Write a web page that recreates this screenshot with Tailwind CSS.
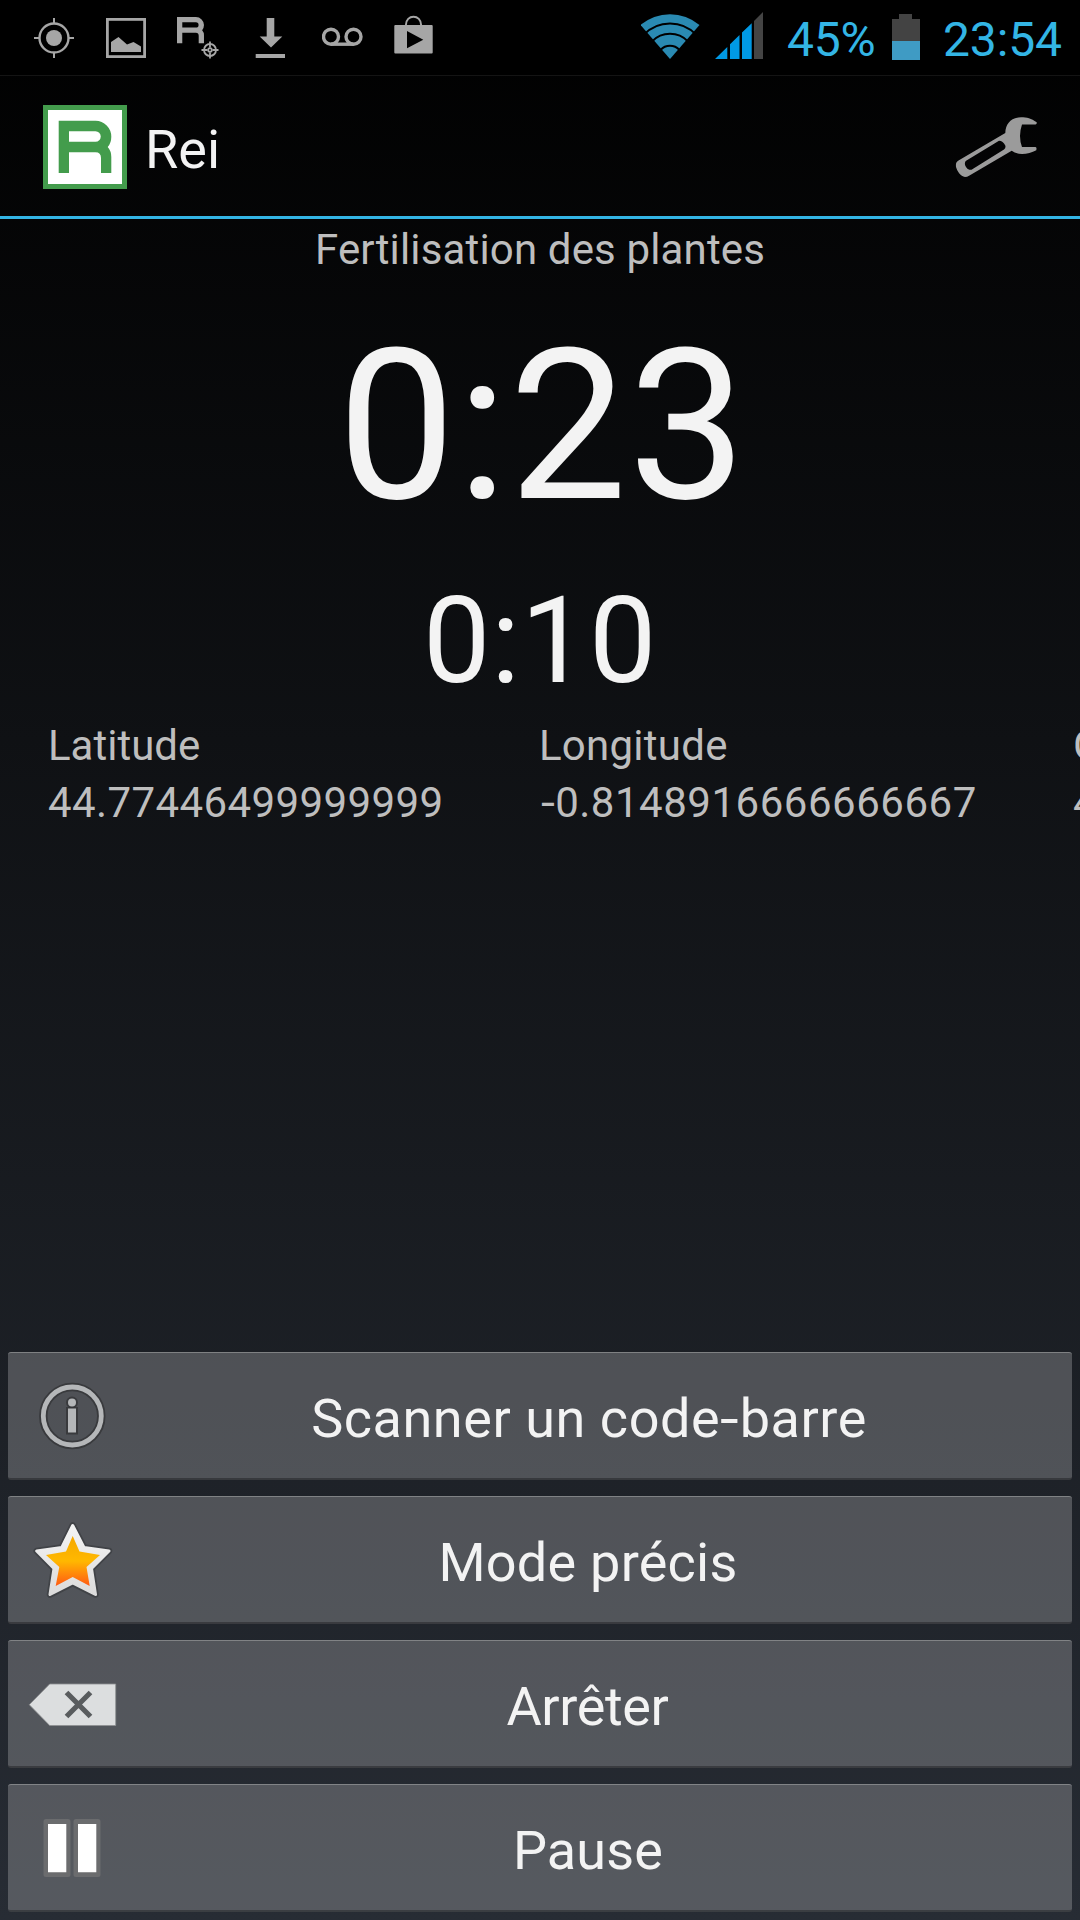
<!DOCTYPE html>
<html lang="fr">
<head>
<meta charset="utf-8">
<title>Rei</title>
<script src="https://cdn.jsdelivr.net/npm/@tailwindcss/browser@4"></script>
</head>
<body class="w-[1080px] h-[1920px] overflow-hidden bg-black font-['Roboto',sans-serif] text-[#f3f3f3]">
<div class="w-[1080px] h-[1920px] flex flex-col overflow-hidden bg-[linear-gradient(to_bottom,#000000,#272c34)]">

  <!-- Status bar -->
  <header class="h-[76px] shrink-0 bg-black border-b border-[#141414] flex justify-between text-[#33b5e5] text-[48px]">
    <div class="flex fill-[#a6a6a6] pl-[34px] gap-[32px]">
      <svg class="w-[40px] h-[75px]" viewBox="34 0 40 75"><circle cx="54" cy="38" r="14.5" fill="none" stroke="#a6a6a6" stroke-width="2.4"/><circle cx="54" cy="38" r="8"/><path d="M53 18h2v6h-2zM53 52h2v6h-2zM34 37h6v2h-6zM68 37h6v2h-6z"/></svg>
      <svg class="w-[40px] h-[75px]" viewBox="106 0 40 75"><rect x="107.4" y="19.4" width="37.2" height="37.2" fill="none" stroke="#a6a6a6" stroke-width="2.8"/><path d="M111 52V42L118.5 37L127 44.5L133.5 42L141 46.5V52Z"/></svg>
      <svg class="w-[42px] h-[75px] -ml-px" viewBox="177 0 42 75"><path fill-rule="evenodd" transform="translate(177 17) scale(.513 .5) translate(-58.7 -120.7)" d="M58.7 120.7H95.5A16 16 0 0 1 111.3 136.7Q111.3 143 107.7 147Q111.3 151 111.3 157V173H101V158Q101 152.2 95.5 152.2H69V173H58.7ZM69 131.2V141.7H95.5a5.2 5.2 0 0 0 0-10.5Z"/><g fill="none" stroke="#a6a6a6" stroke-width="1.8"><circle cx="210" cy="50" r="6"/><circle cx="210" cy="50" r="1.8"/><path d="M210 41.5v6M210 52.5v6M201.5 50h6M212.500 50h6"/></g></svg>
      <svg class="w-[30px] h-[75px] ml-[4px]" viewBox="255 0 30 75"><path d="M266.700 18H274.300V36.500H282.300L271 47.500L259.700 36.500H266.700ZM255.700 54H285V58H255.700Z"/></svg>
      <svg class="w-[41px] h-[75px] ml-[5px]" viewBox="322 0 41 75"><g fill="none" stroke="#a6a6a6" stroke-width="3.400"><circle cx="331" cy="36.700" r="7.500"/><circle cx="353.500" cy="36.700" r="7.500"/><path d="M331 44.200H353.500"/></g></svg>
      <svg class="w-[40px] h-[75px] -ml-px" viewBox="394 0 40 75"><path fill-rule="evenodd" d="M395.300 25H431.700Q432.700 25 432.700 26V52.500Q432.700 53.500 431.700 53.500H395.300Q394.300 53.500 394.300 52.500V26Q394.300 25 395.300 25ZM407 31V48.300L423.300 39.700Z"/><path d="M405.800 25.500C405.800 13.800 421.200 13.800 421.200 25.500" fill="none" stroke="#a6a6a6" stroke-width="2"/></svg>
    </div>
    <div class="flex">
      <svg class="w-[60px] h-[75px]" viewBox="641.5 0 60 75"><path d="M641 25A45.500 45.500 0 0 1 700 25L670.500 59Z" fill="#2a8ab2"/><g fill="none" stroke="#000" stroke-width="2"><path d="M644.500 34.500A36 36 0 0 1 696.500 34.500"/><path d="M652.500 41.500A25 25 0 0 1 688.500 41.500"/><path d="M661 50A13 13 0 0 1 680 50"/></g></svg>
      <svg class="w-[49px] h-[75px] ml-[14px]" viewBox="715 0 49 75"><path fill="#0099e5" d="M715 59L727.300 47V59ZM730 59V44.300L739.500 35V59ZM742 59V32.600L751.700 23.200V59Z"/><path fill="#444" d="M754 59V21L763 12V59Z"/></svg>
      <span class="w-[105px] ml-[23px] leading-[79px] tracking-[-0.2px]">45%</span>
      <svg class="w-[28px] h-[75px]" viewBox="892 0 28 75"><path fill="#434343" d="M899 14H912V19H920V60H892V19H899Z"/><path fill="#3f9bc4" d="M892 41H920V60H892Z"/></svg>
      <span class="w-[137px] ml-[23px] leading-[79px] tracking-[-0.14px]">23:54</span>
    </div>
  </header>

  <!-- Action bar -->
  <nav class="h-[143px] shrink-0 border-b-[3px] border-[#33b5e5] flex items-start pl-[43px]">
    <svg class="w-[84px] h-[84px] mt-[29px]" viewBox="43 105 84 84"><path fill="#439c4c" d="M43 105h84v84h-84z"/><path fill="#fff" d="M48 110h74v74h-74z"/><path fill="#439c4c" fill-rule="evenodd" d="M58.700 120.700H95.500A16 16 0 0 1 111.300 136.700Q111.300 143 107.700 147Q111.300 151 111.300 157V173H101V158Q101 152.200 95.500 152.200H69V173H58.700ZM69 131.200V141.700H95.500a5.200 5.200 0 0 0 0-10.500Z"/></svg>
    <h1 class="flex-1 pl-[18px] text-[54px] leading-[147px]">Rei</h1>
    <svg class="w-[84px] h-[62px] mt-[40px] mr-[41px]" viewBox="955 116 84 62"><path fill="#9b9b9b" fill-rule="evenodd" d="M1036.700 122.300C1031 118.500 1027 117.300 1021 117.300C1011 117.500 1005.500 124 1005.300 133L958.500 160.500C956 162 955.700 164 956 167C957.500 172 960.500 176 965 177Q967 177 969.500 175.500L1011.700 150.700Q1016 154 1022 154C1027 154 1032 152.500 1036.300 150.300Q1037 147 1035.500 147H1022Q1018 136 1022 124.500H1035.500Q1037 124.300 1036.700 122.300ZM999 140.800Q1003 141 1005.300 145.500Q1006 148 1004 149.500L971.500 169.700C967.500 171 963 164.500 965.700 161Z"/></svg>
  </nav>

  <!-- Timers and position -->
  <main class="flex-1 flex flex-col">
    <p class="text-center text-[42px] leading-[61px] tracking-[0.15px] text-[#bebebe]">Fertilisation des plantes</p>
    <p class="text-center text-[210px] leading-[292px] tracking-[1.27px] pl-[5px]">0:23</p>
    <p class="text-center text-[120px] leading-[138px] tracking-[0.7px]">0:10</p>
    <div class="grid grid-cols-[491px_534px_60px] pl-[48px] pt-[7px] text-[42px] leading-[57px] text-[#bebebe] whitespace-nowrap">
      <div><p>Latitude</p><p class="tracking-[0.4px]">44.77446499999999</p></div>
      <div><p class="tracking-[0.25px]">Longitude</p><p class="tracking-[0.52px]"><span class="inline-block ml-[1.5px] mr-[2.5px] origin-left scale-x-120">-</span>0.8148916666666667</p></div>
      <div><p>G</p><p>4</p></div>
    </div>
  </main>

  <!-- Actions -->
  <div class="flex flex-col gap-[16px] px-[8px] pb-[8px] text-[54px]">
    <button class="h-[128px] flex rounded-[3px] bg-[#aeb0b2]/35 border-t border-t-[#a0a2a4]/60 border-b-2 border-b-black/30">
      <svg class="w-[112px] h-[125px]" viewBox="8 1353 112 125"><g fill="none" stroke="#333537" stroke-opacity=".8"><circle cx="72.300" cy="1416" r="29" stroke-width="8.500"/><circle cx="72" cy="1402.500" r="4.500" stroke-width="3"/><path d="M67.500 1408.500h9v24.500h-9z" stroke-width="3"/></g><circle cx="72.300" cy="1416" r="29" fill="none" stroke="#b5b7b9" stroke-width="4.800"/><circle cx="72" cy="1402.500" r="4" fill="#b5b7b9"/><path d="M68 1408.500h8v24h-8z" fill="#b5b7b9"/></svg>
      <span class="flex-1 pr-[14px] leading-[131px] tracking-[0.55px]">Scanner un code<span class="inline-block mr-[4px] origin-left scale-x-125">-</span>barre</span>
    </button>
    <button class="h-[128px] flex rounded-[3px] bg-[#aeb0b2]/35 border-t border-t-[#a0a2a4]/60 border-b-2 border-b-black/30">
      <svg class="w-[112px] h-[125px]" viewBox="8 1497 112 125"><defs><linearGradient id="g" x1="0" y1="0" x2="0" y2="1"><stop offset="0" stop-color="#f5a800"/><stop offset=".5" stop-color="#ffb800"/><stop offset="1" stop-color="#ff5a14"/></linearGradient><linearGradient id="w" x1="0" y1="0" x2="0" y2="1"><stop offset="0" stop-color="#f4f4f4"/><stop offset="1" stop-color="#dcdcdc"/></linearGradient></defs><path d="M72.700 1525.500L84 1547.500L109 1551L91.500 1568.500L95.500 1594.500L72.700 1583L50 1594.500L54 1568.500L36.700 1551L61.800 1547.500Z" fill="none" stroke="#2c2e30" stroke-opacity=".45" stroke-width="6.500" stroke-linejoin="round"/><path d="M72.700 1525.500L84 1547.500L109 1551L91.500 1568.500L95.500 1594.500L72.700 1583L50 1594.500L54 1568.500L36.700 1551L61.800 1547.500Z" fill="url(#w)" stroke="url(#w)" stroke-width="3" stroke-linejoin="round"/><path d="M72.700 1536L79.500 1551.500L100 1555L86.500 1567L89.700 1586L72.700 1577L55.700 1586L59.300 1567L46 1555L66 1551.500Z" fill="url(#g)"/></svg>
      <span class="flex-1 pr-[16px] leading-[131px] tracking-[0.25px]">Mode précis</span>
    </button>
    <button class="h-[128px] flex rounded-[3px] bg-[#aeb0b2]/35 border-t border-t-[#a0a2a4]/60 border-b-2 border-b-black/30">
      <svg class="w-[112px] h-[125px]" viewBox="8 1641 112 125"><path d="M29.300 1704.700L49.700 1684H115.700V1725.500H49.700Z" fill="#dcdedf" stroke="#8e9092" stroke-width=".8"/><path d="M66.500 1692.500L90.500 1716.500M90.500 1692.500L66.500 1716.500" stroke="#595c5e" stroke-width="5.200"/></svg>
      <span class="flex-1 pr-[17px] leading-[131px] tracking-[-0.35px]">Arrêter</span>
    </button>
    <button class="h-[128px] flex rounded-[3px] bg-[#aeb0b2]/35 border-t border-t-[#a0a2a4]/60 border-b-2 border-b-black/30">
      <svg class="w-[112px] h-[125px]" viewBox="8 1785 112 125"><path d="M46 1819h22q2.500 0 2.500 2.500v53q0 2.500-2.500 2.500h-22q-2.500 0-2.500-2.500v-53q0-2.500 2.500-2.500zM76 1819h22q2.500 0 2.500 2.500v53q0 2.500-2.500 2.500h-22q-2.500 0-2.500-2.500v-53q0-2.500 2.500-2.500z" fill="#6b6c6e"/><path d="M48 1824h18.300v48.300h-18.300zM78 1824h18.300v48.300h-18.300z" fill="#fff"/></svg>
      <span class="flex-1 pr-[16px] leading-[131px] tracking-[0.15px]">Pause</span>
    </button>
  </div>
</div>
</body>
</html>
